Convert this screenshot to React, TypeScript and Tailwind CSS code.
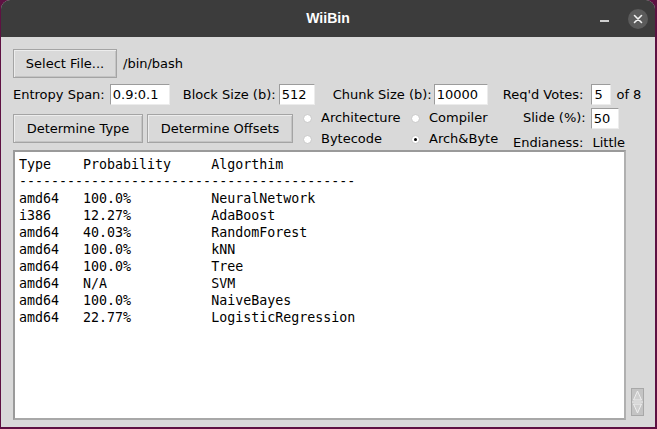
import React from "react";

const rows: [string, string, string][] = [
  ["amd64", "100.0%", "NeuralNetwork"],
  ["i386", "12.27%", "AdaBoost"],
  ["amd64", "40.03%", "RandomForest"],
  ["amd64", "100.0%", "kNN"],
  ["amd64", "100.0%", "Tree"],
  ["amd64", "N/A", "SVM"],
  ["amd64", "100.0%", "NaiveBayes"],
  ["amd64", "22.77%", "LogisticRegression"],
];

function pad(s: string, n: number) {
  return s + " ".repeat(Math.max(0, n - s.length));
}

function TkButton({ children, className = "" }: { children: React.ReactNode; className?: string }) {
  return (
    <button
      className={`h-[29px] border border-[#a4a4a4] bg-[#d9d9d9] shadow-[inset_1px_1px_0_#ededed,inset_-1px_-1px_0_#c4c4c4] text-[13px] text-black flex items-center justify-center ${className}`}
    >
      {children}
    </button>
  );
}

function Entry({ value, className = "" }: { value: string; className?: string }) {
  return (
    <div
      className={`h-[21px] bg-white border border-t-[#9c9c9c] border-l-[#9c9c9c] border-r-[#ececec] border-b-[#ececec] pl-[2px] text-[13px] leading-[19px] text-black ${className}`}
    >
      {value}
    </div>
  );
}

function Radio({ label, checked = false }: { label: string; checked?: boolean }) {
  return (
    <div className="flex items-center">
      <span className="w-[9px] h-[9px] rounded-full bg-white border border-[#c8c8c8] flex items-center justify-center">
        {checked && <span className="w-[3px] h-[3px] rounded-full bg-black" />}
      </span>
      <span className="ml-[9px]">{label}</span>
    </div>
  );
}

export default function App() {
  const header = pad("Type", 8) + pad("Probability", 16) + "Algorthim";
  const lines = [header, "-".repeat(42), ...rows.map(([t, p, a]) => pad(t, 8) + pad(p, 16) + a)];

  return (
    <div className="w-[657px] h-[429px] bg-[#5e1142] overflow-hidden">
      <div className="ml-[1px] mr-[2px] h-[427px] rounded-t-[9px] overflow-hidden flex flex-col bg-[#d9d9d9] font-['DejaVu_Sans',sans-serif] text-[13px] text-black">
        {/* Title bar */}
        <div className="h-[37px] bg-[#3c3c3c] relative flex items-center justify-center shrink-0">
          <span className="text-white font-bold text-[14px] font-['Liberation_Sans',sans-serif]">WiiBin</span>
          <span className="absolute left-[599px] top-[20px] w-[9px] h-[1.5px] bg-[#cfcfcf]" />
          <span className="absolute left-[627px] top-[9px] w-[20px] h-[20px] rounded-full bg-[#5b5b5b] flex items-center justify-center">
            <svg width="10" height="10" viewBox="0 0 10 10">
              <path d="M1.5 1.5 L8.5 8.5 M8.5 1.5 L1.5 8.5" stroke="#f2f2f2" strokeWidth="1.6" strokeLinecap="round" />
            </svg>
          </span>
        </div>

        {/* Content */}
        <div className="flex-1 flex flex-col pl-[12px] pt-[12px]">
          <div className="flex items-center">
            <TkButton className="w-[104px]">Select File...</TkButton>
            <span className="ml-[6px]">/bin/bash</span>
          </div>

          <div className="flex items-center mt-[6px]">
            <span>Entropy Span:</span>
            <Entry value="0.9:0.1" className="ml-[5px] w-[60px]" />
            <span className="ml-[13px]">Block Size (b):</span>
            <Entry value="512" className="ml-[3px] w-[36px]" />
            <span className="ml-[18px]">Chunk Size (b):</span>
            <Entry value="10000" className="ml-[2px] w-[54px]" />
            <span className="ml-[15px]">Req'd Votes:</span>
            <Entry value="5" className="ml-[8px] w-[20px]" />
            <span className="ml-[5px]">of 8</span>
          </div>

          <div className="flex h-[28px] mt-[9px]">
            <TkButton className="w-[130px] h-[28px]">Determine Type</TkButton>
            <TkButton className="w-[146px] h-[28px] ml-[4px]">Determine Offsets</TkButton>
            <div className="ml-[10px] -mt-[7px] grid grid-cols-[108px_100px_auto] grid-rows-[22px_20px] h-[42px]">
              <div className="flex items-center">
                <Radio label="Architecture" />
              </div>
              <div className="flex items-center">
                <Radio label="Compiler" />
              </div>
              <div className="flex items-center pl-[12px]">
                <span>Slide (%):</span>
                <Entry value="50" className="ml-[5px] w-[28px]" />
              </div>
              <div className="flex items-center">
                <Radio label="Bytecode" />
              </div>
              <div className="flex items-center">
                <Radio label="Arch&Byte" checked />
              </div>
              <div className="flex items-center pl-[2px] pt-[7px]">
                <span>Endianess:</span>
                <span className="ml-[9px]">Little</span>
              </div>
            </div>
          </div>

          <div className="flex mt-[8px]">
            <div className="w-[613px] h-[270px] bg-white border-2 border-t-[#9a9a9a] border-l-[#9a9a9a] border-r-[#b0b0b0] border-b-[#a8a8a8] pl-[4px] pt-[4px] font-['DejaVu_Sans_Mono',monospace] text-[13.3px] leading-[17px] whitespace-pre">
              {lines.map((l, i) => (
                <div key={i}>{l}</div>
              ))}
            </div>
            <div className="ml-[5px] mt-[238px] w-[13px] h-[28px] bg-[#c4c4c4] border border-[#a8a8a8]">
              <svg width="11" height="26" viewBox="0 0 11 26">
                <path d="M5.5 2 L9.5 11 L1.5 11 Z" fill="#d0d0d0" stroke="#efefef" strokeWidth="1" />
                <line x1="0" y1="13" x2="11" y2="13" stroke="#efefef" strokeWidth="1" />
                <path d="M1.5 15 L9.5 15 L5.5 24 Z" fill="#d0d0d0" stroke="#efefef" strokeWidth="1" />
              </svg>
            </div>
          </div>
        </div>
      </div>
    </div>
  );
}
